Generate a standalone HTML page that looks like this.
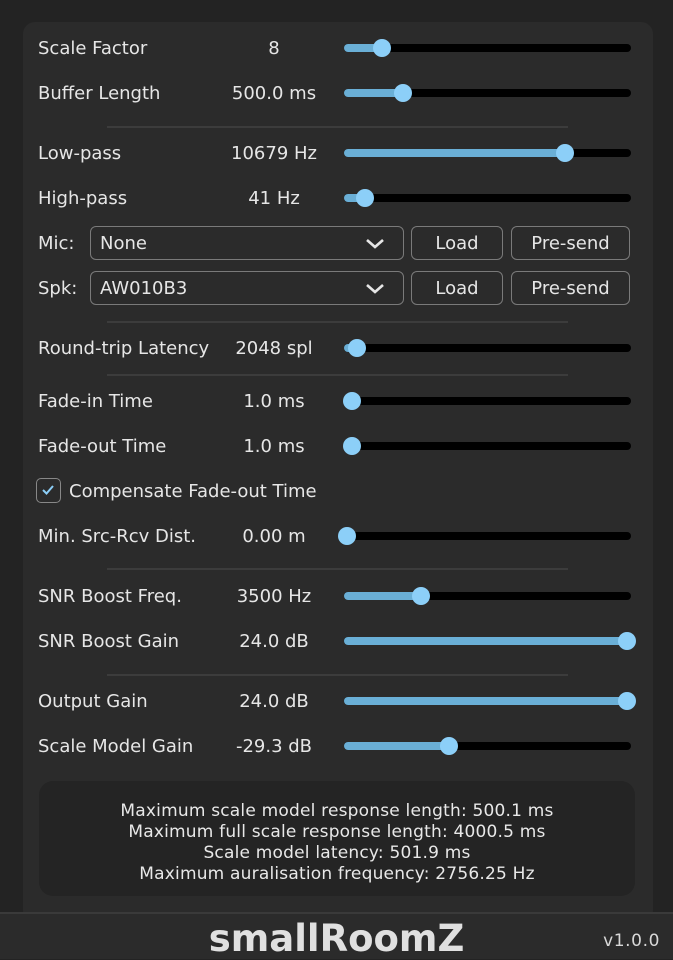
<!DOCTYPE html>
<html><head><style>
*{margin:0;padding:0;box-sizing:border-box}
body{width:673px;height:959px;background:#232323;position:relative;overflow:hidden;font-family:"DejaVu Sans","Liberation Sans",sans-serif;color:#e6e6e6}
.panel{position:absolute;left:23px;top:22px;width:630px;height:900px;background:#2b2b2b;border-radius:12px}
.lbl{position:absolute;left:38px;font-size:18px;line-height:20px;white-space:nowrap;margin-top:1px}
.val{position:absolute;left:194px;width:160px;text-align:center;font-size:18px;line-height:20px;margin-top:1px}
.trk{position:absolute;left:344px;width:287px;height:8px;background:#000;border-radius:4px}
.fill{position:absolute;left:0;top:0;height:8px;background:#6aafd6;border-radius:4px}
.th{position:absolute;top:-5px;width:18px;height:18px;margin-left:-9px;background:#8ccff8;border-radius:50%}
.sep{position:absolute;left:107px;width:461px;height:2px;background:#3c3c3c}
.box{position:absolute;height:34px;border:1.5px solid #7a7a7a;border-radius:6px;font-size:18px;line-height:33px;white-space:nowrap}
.info{position:absolute;left:39px;top:781px;width:596px;height:115px;background:#242424;border-radius:14px;text-align:center;font-size:17px;letter-spacing:0.2px;line-height:21px;padding-top:20px;color:#e8e8e8;white-space:nowrap}
.foot{position:absolute;left:0;top:912px;width:673px;height:47px;background:#2b2b2b;border-top:2px solid #3a3a3a}
</style></head><body>
<div class="panel"></div>

<div class="lbl" style="top:38px">Scale Factor</div><div class="val" style="top:38px">8</div>
<div class="trk" style="top:44px"><div class="fill" style="width:38px"></div><div class="th" style="left:38px"></div></div>
<div class="lbl" style="top:83px">Buffer Length</div><div class="val" style="top:83px">500.0 ms</div>
<div class="trk" style="top:89px"><div class="fill" style="width:59px"></div><div class="th" style="left:59px"></div></div>
<div class="sep" style="top:126px"></div>
<div class="lbl" style="top:143px">Low-pass</div><div class="val" style="top:143px">10679 Hz</div>
<div class="trk" style="top:149px"><div class="fill" style="width:221px"></div><div class="th" style="left:221px"></div></div>
<div class="lbl" style="top:188px">High-pass</div><div class="val" style="top:188px">41 Hz</div>
<div class="trk" style="top:194px"><div class="fill" style="width:21px"></div><div class="th" style="left:21px"></div></div>

<div class="lbl" style="top:233px">Mic:</div>
<div class="box" style="left:90px;top:226px;width:314px;padding-left:9px">None<svg style="position:absolute;right:18px;top:11px" width="20" height="11" viewBox="0 0 20 11"><path d="M2 2 L10 9 L18 2" stroke="#e6e6e6" stroke-width="2.6" fill="none"/></svg></div>
<div class="box" style="left:411px;top:226px;width:92px;text-align:center">Load</div>
<div class="box" style="left:511px;top:226px;width:119px;text-align:center">Pre-send</div>
<div class="lbl" style="top:278px">Spk:</div>
<div class="box" style="left:90px;top:271px;width:314px;padding-left:9px">AW010B3<svg style="position:absolute;right:18px;top:11px" width="20" height="11" viewBox="0 0 20 11"><path d="M2 2 L10 9 L18 2" stroke="#e6e6e6" stroke-width="2.6" fill="none"/></svg></div>
<div class="box" style="left:411px;top:271px;width:92px;text-align:center">Load</div>
<div class="box" style="left:511px;top:271px;width:119px;text-align:center">Pre-send</div>
<div class="sep" style="top:321px"></div>

<div class="lbl" style="top:338px">Round-trip Latency</div><div class="val" style="top:338px">2048 spl</div>
<div class="trk" style="top:344px"><div class="fill" style="width:13px"></div><div class="th" style="left:13px"></div></div>
<div class="sep" style="top:374px"></div>
<div class="lbl" style="top:391px">Fade-in Time</div><div class="val" style="top:391px">1.0 ms</div>
<div class="trk" style="top:397px"><div class="th" style="left:8px"></div></div>
<div class="lbl" style="top:436px">Fade-out Time</div><div class="val" style="top:436px">1.0 ms</div>
<div class="trk" style="top:442px"><div class="th" style="left:8px"></div></div>

<div style="position:absolute;left:36px;top:478px;width:25px;height:25px;border:1.5px solid #888;border-radius:5px"><svg width="22" height="22" viewBox="0 0 22 22"><path d="M6 11 L9.5 14.5 L16 7" stroke="#8ccff8" stroke-width="2" fill="none"/></svg></div>
<div class="lbl" style="left:69px;top:481px">Compensate Fade-out Time</div>

<div class="lbl" style="top:526px">Min. Src-Rcv Dist.</div><div class="val" style="top:526px">0.00 m</div>
<div class="trk" style="top:532px"><div class="th" style="left:3px"></div></div>
<div class="sep" style="top:568px"></div>
<div class="lbl" style="top:586px">SNR Boost Freq.</div><div class="val" style="top:586px">3500 Hz</div>
<div class="trk" style="top:592px"><div class="fill" style="width:77px"></div><div class="th" style="left:77px"></div></div>
<div class="lbl" style="top:631px">SNR Boost Gain</div><div class="val" style="top:631px">24.0 dB</div>
<div class="trk" style="top:637px"><div class="fill" style="width:283px"></div><div class="th" style="left:283px"></div></div>
<div class="sep" style="top:674px"></div>
<div class="lbl" style="top:691px">Output Gain</div><div class="val" style="top:691px">24.0 dB</div>
<div class="trk" style="top:697px"><div class="fill" style="width:283px"></div><div class="th" style="left:283px"></div></div>
<div class="lbl" style="top:736px">Scale Model Gain</div><div class="val" style="top:736px">-29.3 dB</div>
<div class="trk" style="top:742px"><div class="fill" style="width:105px"></div><div class="th" style="left:105px"></div></div>

<div class="info">Maximum scale model response length: 500.1 ms<br>Maximum full scale response length: 4000.5 ms<br>Scale model latency: 501.9 ms<br>Maximum auralisation frequency: 2756.25 Hz</div>

<div class="foot">
<div style="position:absolute;left:0;width:673px;top:4px;text-align:center;font-size:37px;font-weight:bold;color:#e0e0e0;line-height:42px">smallRoomZ</div>
<div style="position:absolute;right:13px;top:17px;font-size:17px;letter-spacing:0.6px;color:#d8d8d8">v1.0.0</div>
</div>
</body></html>
